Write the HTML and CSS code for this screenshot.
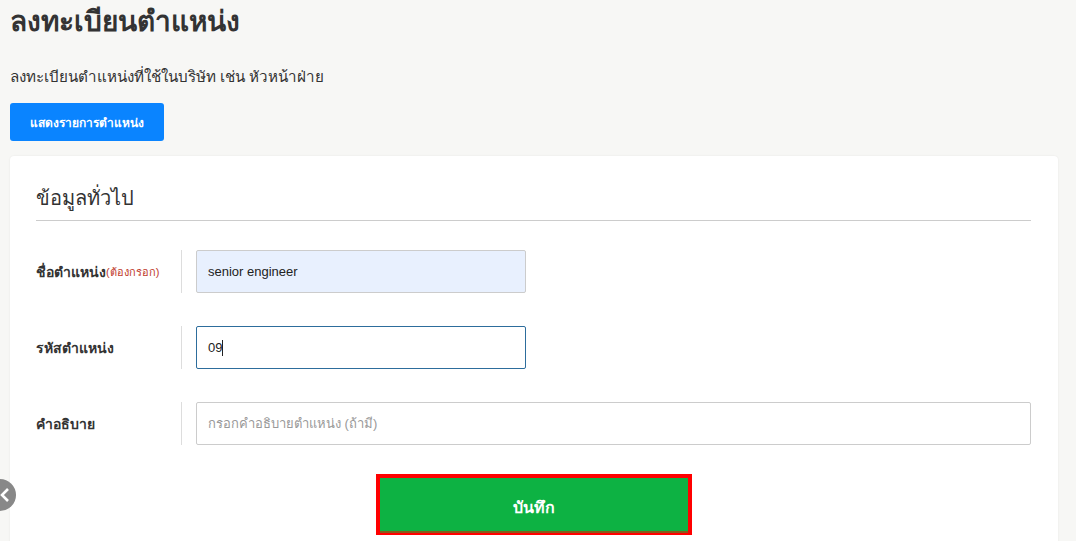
FILE: index.html
```html
<!DOCTYPE html>
<html lang="th">
<head>
<meta charset="utf-8">
<link rel="stylesheet" href="styles.css">
</head>
<body>
<div class="page">
  <h1 class="title">ลงทะเบียนตำแหน่ง</h1>
  <p class="subtitle">ลงทะเบียนตำแหน่งที่ใช้ในบริษัท เช่น หัวหน้าฝ่าย</p>
  <button class="btn-list">แสดงรายการตำแหน่ง</button>
  <div class="card">
    <h2 class="section-title">ข้อมูลทั่วไป</h2>
    <div class="row">
      <div class="label">ชื่อตำแหน่ง<span class="req">(ต้องกรอก)</span></div>
      <div class="field"><div class="input short autofill">senior engineer</div></div>
    </div>
    <div class="row">
      <div class="label">รหัสตำแหน่ง</div>
      <div class="field"><div class="input short focus">09<span class="caret"></span></div></div>
    </div>
    <div class="row">
      <div class="label">คำอธิบาย</div>
      <div class="field"><div class="input long placeholder">กรอกคำอธิบายตำแหน่ง (ถ้ามี)</div></div>
    </div>
    <div class="actions">
      <div class="save-wrap"><button class="btn-save">บันทึก</button></div>
    </div>
  </div>
</div>
<div class="back-btn"><svg width="12" height="14" viewBox="0 0 12 14"><path d="M9 1 L3 7 L9 13" fill="none" stroke="#fff" stroke-width="2.6"/></svg></div>
</body>
</html>
```
FILE: styles.css
```css
html, body {
  margin: 0;
  padding: 0;
  background: #f7f7f5;
  font-family: "Liberation Sans", "Noto Sans", sans-serif;
  color: #333;
  overflow: hidden;
}
.page {
  padding: 0 18px 0 10px;
}
.title {
  margin: 0;
  padding-top: 5px;
  font-size: 28px;
  line-height: 34px;
  font-weight: bold;
  color: #333;
}
.subtitle {
  margin: 28px 0 0;
  font-size: 15.2px;
  line-height: 20px;
  color: #333;
}
.btn-list {
  margin-top: 16px;
  height: 38px;
  width: 154px;
  border: none;
  border-radius: 3px;
  background: #0a84ff;
  color: #fff;
  font-family: inherit;
  font-size: 12px;
  font-weight: bold;
  padding: 0;
}
.card {
  margin-top: 15px;
  background: #fff;
  border-radius: 4px;
  box-shadow: 0 0 2px rgba(0,0,0,0.08);
  padding: 24px 27px 30px 26px;
}
.section-title {
  margin: 0;
  font-size: 20px;
  font-weight: normal;
  line-height: 36px;
  color: #333;
  padding-bottom: 4px;
  border-bottom: 1px solid #ccc;
}
.row {
  display: flex;
  align-items: center;
  margin-top: 29px;
}
.row + .row {
  margin-top: 33px;
}
.label {
  width: 146px;
  font-size: 14px;
  font-weight: bold;
  color: #333;
  align-self: stretch;
  display: flex;
  align-items: center;
  border-right: 1px solid #ddd;
  box-sizing: border-box;
}
.req {
  font-size: 11px;
  font-weight: normal;
  color: #c0392b;
}
.field {
  flex: 1;
  padding-left: 14px;
}
.input {
  height: 43px;
  box-sizing: border-box;
  border: 1px solid #ccc;
  border-radius: 2px;
  padding: 0 11px;
  display: flex;
  align-items: center;
  font-size: 13px;
  color: #222;
  background: #fff;
}
.short { width: 330px; }
.long { width: 100%; }
.autofill { background: #e8f0fe; }
.focus { border-color: #2d6d9c; }
.placeholder { color: #999; }
.caret {
  display: inline-block;
  width: 1px;
  height: 16px;
  background: #222;
}
.actions {
  display: flex;
  justify-content: center;
  margin-top: 29px;
}
.save-wrap {
  border: 4px solid #f00;
  width: 308px;
  height: 53px;
}
.btn-save {
  width: 100%;
  height: 100%;
  border: none;
  background: #0db243;
  color: #fff;
  font-family: inherit;
  font-size: 16px;
  font-weight: bold;
  padding: 5px 0 0;
  box-shadow: 0 2px 0 #8a5a1a;
}
.back-btn {
  position: absolute;
  left: -16px;
  top: 479px;
  width: 32px;
  height: 32px;
  border-radius: 50%;
  background: #888;
  display: flex;
  align-items: center;
  justify-content: flex-end;
  box-sizing: border-box;
}
.back-btn svg { margin-right: 5px; }
```
